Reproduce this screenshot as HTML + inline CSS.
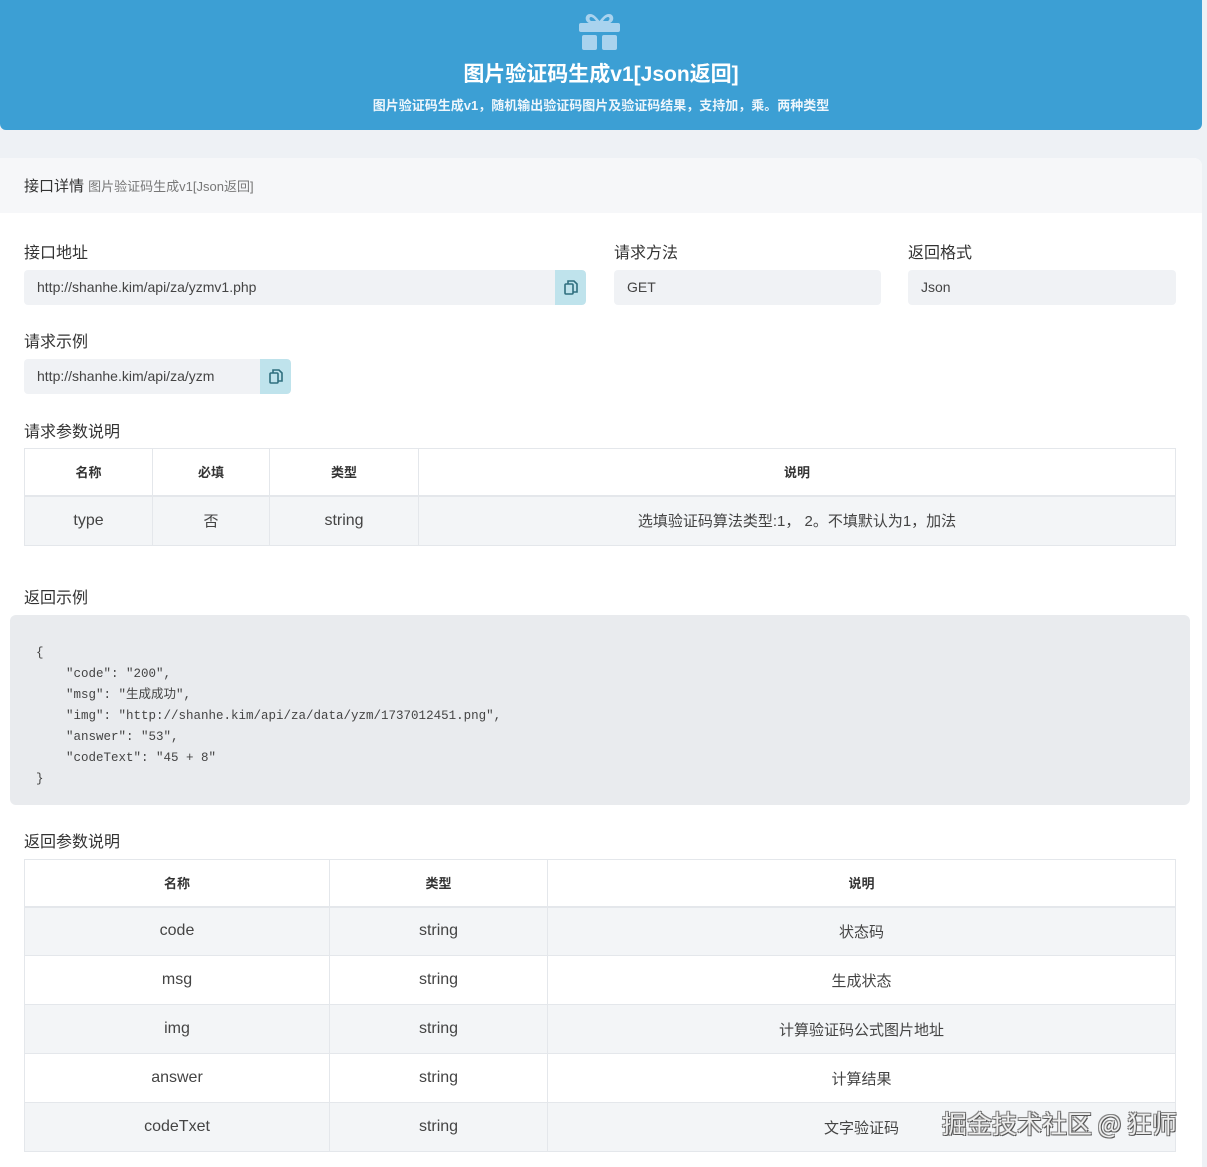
<!DOCTYPE html>
<html><head><meta charset="utf-8">
<style>
*{margin:0;padding:0;box-sizing:border-box}
body{width:1207px;height:1167px;background:#eef1f5;font-family:"Liberation Sans","Noto Sans CJK SC",sans-serif;color:#333;position:relative;overflow:hidden}
.hdr{position:absolute;left:0;top:0;width:1202px;height:130px;background:#3c9fd4;border-radius:0 0 6px 6px;text-align:center;color:#fff}
.hdr h1{position:absolute;top:58px;left:0;right:0;font-size:21px;font-weight:bold}
.hdr p{position:absolute;top:95px;left:0;right:0;font-size:13px;font-weight:bold;color:#eef6fc}
.card{position:absolute;left:0;top:158px;width:1202px;height:1009px;background:#fff;border-radius:0 8px 0 0;overflow:hidden}
.ch{height:55px;background:#f6f7f9;padding:17px 24px;font-size:15px;color:#333}
.ch span{font-size:13px;color:#777}
.lbl{position:absolute;font-size:16px;color:#333}
.inp{position:absolute;height:35px;background:#f0f2f5;border-radius:4px;font-size:14px;color:#444;padding:9px 13px;white-space:nowrap;overflow:hidden}
.btn{position:absolute;top:0;right:0;width:31px;height:35px;background:#bfe3ec;border-radius:0 4px 4px 0;display:flex;align-items:center;justify-content:center}
table{position:absolute;border-collapse:collapse;font-size:16px;color:#444}
td,th{border:1px solid #e4e7eb;text-align:center}
th{font-size:13px;font-weight:bold;color:#333;height:47px;border-bottom:2px solid #e4e7eb}
.g{background:#f3f5f7}
td.cn{font-size:15px}
.code{position:absolute;left:10px;top:457px;width:1180px;height:190px;background:#e9ebee;border-radius:6px;font-family:"Liberation Mono","Noto Sans CJK SC",monospace;font-size:12.5px;line-height:21px;color:#444;padding:28px 26px 0;white-space:pre}
.wm{position:absolute;left:942px;top:1105px;font-size:25px;color:#eee;text-shadow:1px 1px 0 #555,-1px -1px 0 #888,1px -1px 0 #777,-1px 1px 0 #777;font-family:"Noto Sans CJK SC",sans-serif;white-space:nowrap}
</style></head><body>
<div class="hdr">
<svg style="position:absolute;left:579px;top:14px" width="41" height="36" viewBox="0 0 41 36"><g fill="#a9d3ee"><path d="M20.5 9 L10 9 C5 7,6 0,11 0 C15 0,18 4,20.5 7 C23 4,26 0,30 0 C35 0,36 7,31 9 Z M17 7 C15 4,13 3,12 3 C10 3,10 6,12 7 Z M24 7 C26 4,28 3,29 3 C31 3,31 6,29 7 Z" fill-rule="evenodd"/><rect x="0" y="9" width="41" height="9" rx="2"/><rect x="3" y="21" width="15" height="15" rx="2"/><rect x="23" y="21" width="15" height="15" rx="2"/></g></svg>
<h1>图片验证码生成v1[Json返回]</h1>
<p>图片验证码生成v1，随机输出验证码图片及验证码结果，支持加，乘。两种类型</p>
</div>
<div class="card">
<div class="ch">接口详情 <span>图片验证码生成v1[Json返回]</span></div>
<div class="lbl" style="left:24px;top:81px">接口地址</div>
<div class="inp" style="left:24px;top:112px;width:562px">http://shanhe.kim/api/za/yzmv1.php<div class="btn"><svg width="14" height="15" viewBox="0 0 14 15" fill="none" stroke="#2f6f7f" stroke-width="1.6"><rect x="1" y="4" width="8" height="10" rx="1"/><path d="M4 4V1h6l3 3v8H9"/></svg></div></div>
<div class="lbl" style="left:614px;top:81px">请求方法</div>
<div class="inp" style="left:614px;top:112px;width:267px">GET</div>
<div class="lbl" style="left:908px;top:81px">返回格式</div>
<div class="inp" style="left:908px;top:112px;width:268px">Json</div>
<div class="lbl" style="left:24px;top:170px">请求示例</div>
<div class="inp" style="left:24px;top:201px;width:267px">http://shanhe.kim/api/za/yzm<div class="btn"><svg width="14" height="15" viewBox="0 0 14 15" fill="none" stroke="#2f6f7f" stroke-width="1.6"><rect x="1" y="4" width="8" height="10" rx="1"/><path d="M4 4V1h6l3 3v8H9"/></svg></div></div>
<div class="lbl" style="left:24px;top:260px">请求参数说明</div>
<table style="left:24px;top:290px;width:1152px">
<tr><th style="width:128px">名称</th><th style="width:117px">必填</th><th style="width:149px">类型</th><th>说明</th></tr>
<tr class="g" style="height:50px"><td>type</td><td class="cn">否</td><td>string</td><td class="cn">选填验证码算法类型:1， 2。不填默认为1，加法</td></tr>
</table>
<div class="lbl" style="left:24px;top:426px">返回示例</div>
<div class="code">{
    "code": "200",
    "msg": "生成成功",
    "img": "http://shanhe.kim/api/za/data/yzm/1737012451.png",
    "answer": "53",
    "codeText": "45 + 8"
}</div>
<div class="lbl" style="left:24px;top:670px">返回参数说明</div>
<table style="left:24px;top:701px;width:1152px">
<tr><th style="width:305px">名称</th><th style="width:218px">类型</th><th>说明</th></tr>
<tr class="g" style="height:49px"><td>code</td><td>string</td><td class="cn">状态码</td></tr>
<tr style="height:49px"><td>msg</td><td>string</td><td class="cn">生成状态</td></tr>
<tr class="g" style="height:49px"><td>img</td><td>string</td><td class="cn">计算验证码公式图片地址</td></tr>
<tr style="height:49px"><td>answer</td><td>string</td><td class="cn">计算结果</td></tr>
<tr class="g" style="height:49px"><td>codeTxet</td><td>string</td><td class="cn">文字验证码</td></tr>
</table>
</div>
<div class="wm">掘金技术社区 @ 狂师</div>
</body></html>
